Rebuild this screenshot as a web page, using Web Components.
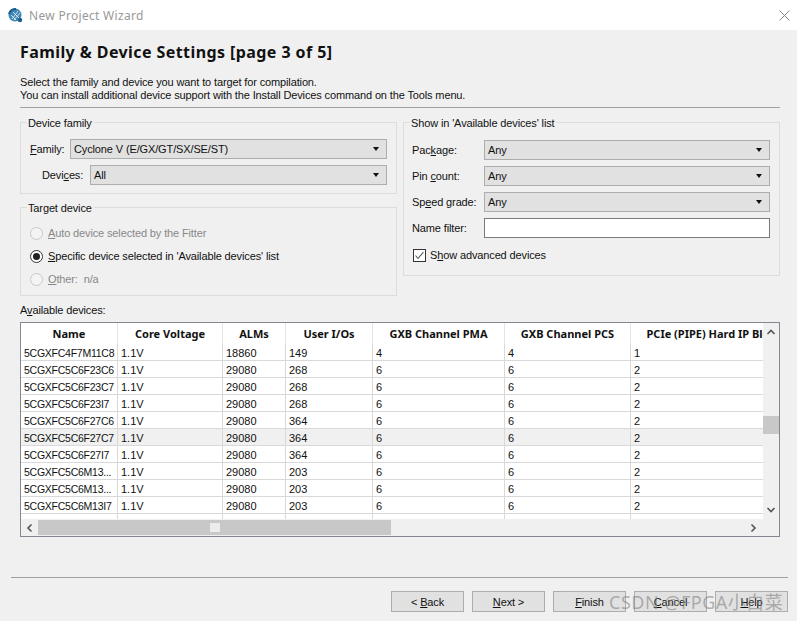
<!DOCTYPE html>
<html>
<head>
<meta charset="utf-8">
<style>
html, body { margin: 0; height: 621px; overflow: hidden; background: #f0f0f0; }
body { font: 11px "Liberation Sans", "Noto Sans CJK SC", sans-serif; color: #111; }
</style>
</head>
<body>
<wizard-window></wizard-window>
<script>
var uiFont = `"Liberation Sans", "Noto Sans CJK SC", sans-serif`;

// label text with one underlined mnemonic letter, "F_amily" style
function mnemonic(text) {
  return text.replace(/_(.)/, "<u>$1</u>");
}

class WizTitlebar extends HTMLElement {
  constructor() {
    super();
    this.attachShadow({ mode: "open" });
    this.shadowRoot.innerHTML = `
    <style>
    :host { display: flex; align-items: center; height: 30px; background: #fff; padding-left: 8px; box-sizing: border-box; letter-spacing: 0; }
    svg.logo { width: 15px; height: 15px; margin-right: 6px; }
    span { flex: 1; font: 12px "Noto Sans", sans-serif; color: #999; letter-spacing: .3px; }
    svg.close { width: 11px; height: 11px; margin-right: 7px; }
    </style>
    <svg class="logo" viewBox="0 0 15 15">
      <circle cx="7" cy="7" r="6.5" fill="#3f86b5"/>
      <path d="M1 6A7 7 0 0 1 8 1" stroke="#1d5f8c" stroke-width="2" fill="none"/>
      <path d="M4 11L10 3M6 12L12 5M5 4L11 10M3 7L8 12" stroke="#d8e8f2" stroke-width=".9" fill="none"/>
      <circle cx="12" cy="12" r="2.2" fill="#1d5f8c"/>
    </svg>
    <span><slot></slot></span>
    <svg class="close" viewBox="0 0 11 11"><path d="M.5 .5L10.5 10.5M10.5 .5L.5 10.5" stroke="#888" stroke-width="1" fill="none"/></svg>
    `;
  }
}

class WizCombo extends HTMLElement {
  constructor() {
    super();
    this.attachShadow({ mode: "open" });
    this.shadowRoot.innerHTML = `
    <style>
    :host { display: flex; align-items: center; height: 20px; box-sizing: border-box; background: #e1e1e1; border: 1px solid #adadad; padding: 0 7px 0 3px; }
    span { flex: 1; white-space: nowrap; }
    i { width: 0; height: 0; border: 3.5px solid transparent; border-top: 4px solid #111; border-bottom: 0; }
    </style>
    <span><slot></slot></span><i></i>
    `;
  }
}

class WizField extends HTMLElement {
  constructor() {
    super();
    this.attachShadow({ mode: "open" });
    this.shadowRoot.innerHTML = `
    <style>
    :host { display: flex; align-items: center; height: 20px; }
    label { flex: none; white-space: nowrap; box-sizing: border-box; padding-left: var(--label-pad, 0); width: var(--label-w, 72px); }
    .box { flex: 1; display: block; min-width: 0; }
    </style>
    <label></label><div class="box"><slot></slot></div>
    `;
  }
  connectedCallback() {
    this.shadowRoot.querySelector("label").innerHTML = mnemonic(this.getAttribute("label") || "");
  }
}

class WizGroup extends HTMLElement {
  constructor() {
    super();
    this.attachShadow({ mode: "open" });
    this.shadowRoot.innerHTML = `
    <style>
    :host { display: block; position: relative; box-sizing: border-box; border: 1px solid #dcdcdc; }
    .legend { position: absolute; top: -7px; left: 6px; background: #f0f0f0; padding: 0 2px 0 1px; line-height: 15px; }
    </style>
    <div class="legend"></div><slot></slot>
    `;
  }
  connectedCallback() {
    this.shadowRoot.querySelector(".legend").textContent = this.getAttribute("legend");
  }
}

class WizRadio extends HTMLElement {
  constructor() {
    super();
    this.attachShadow({ mode: "open" });
    this.shadowRoot.innerHTML = `
    <style>
    :host { display: flex; align-items: center; height: 23px; }
    .dot { flex: none; box-sizing: border-box; width: 13px; height: 13px; border-radius: 50%; border: 1px solid #333; background: #fff; margin-right: 5px; display: flex; align-items: center; justify-content: center; }
    .dot b { width: 7px; height: 7px; border-radius: 50%; background: #222; display: none; }
    .txt { white-space: pre; position: relative; top: -1px; }
    :host([checked]) .dot b { display: block; }
    :host([disabled]) { color: #888; }
    :host([disabled]) .dot { border-color: #c8c8c8; background: #f4f4f4; }
    </style>
    <span class="dot"><b></b></span><span class="txt"></span>
    `;
  }
  connectedCallback() {
    this.shadowRoot.querySelector(".txt").innerHTML = mnemonic(this.getAttribute("label"));
  }
}

class WizCheck extends HTMLElement {
  constructor() {
    super();
    this.attachShadow({ mode: "open" });
    this.shadowRoot.innerHTML = `
    <style>
    :host { display: flex; align-items: center; height: 16px; }
    svg { width: 13px; height: 13px; margin-right: 4px; flex: none; }
    </style>
    <svg viewBox="0 0 13 13"><rect x=".5" y=".5" width="12" height="12" fill="#fff" stroke="#333"/><path d="M2.5 6.5L5 9.5L10.5 3" fill="none" stroke="#555" stroke-width="1.1"/></svg>
    <span class="txt"></span>
    `;
  }
  connectedCallback() {
    this.shadowRoot.querySelector(".txt").innerHTML = mnemonic(this.getAttribute("label"));
  }
}

var columns = [
  ["Name", 97], ["Core Voltage", 105], ["ALMs", 63], ["User I/Os", 87],
  ["GXB Channel PMA", 132], ["GXB Channel PCS", 126], ["PCIe (PIPE) Hard IP Blocks", 173]
];
var rows = [
  ["5CGXFC4F7M11C8", "18860", "149", "4", "4", "1"],
  ["5CGXFC5C6F23C6", "29080", "268", "6", "6", "2"],
  ["5CGXFC5C6F23C7", "29080", "268", "6", "6", "2"],
  ["5CGXFC5C6F23I7", "29080", "268", "6", "6", "2"],
  ["5CGXFC5C6F27C6", "29080", "364", "6", "6", "2"],
  ["5CGXFC5C6F27C7", "29080", "364", "6", "6", "2"],
  ["5CGXFC5C6F27I7", "29080", "364", "6", "6", "2"],
  ["5CGXFC5C6M13...", "29080", "203", "6", "6", "2"],
  ["5CGXFC5C6M13...", "29080", "203", "6", "6", "2"],
  ["5CGXFC5C6M13I7", "29080", "203", "6", "6", "2"],
  ["", "", "", "", "", ""]
];

class DeviceTable extends HTMLElement {
  constructor() {
    super();
    this.attachShadow({ mode: "open" });
    var tpl = columns.map(c => c[1] + "px").join(" ");
    var head = columns.map(c => `<div class="th">${c[0]}</div>`).join("");
    var body = rows.map((r, i) => {
      var cells = [r[0], r[0] ? "1.1V" : ""].concat(r.slice(1));
      return `<div class="row${i == 5 ? " sel" : ""}">` + cells.map(v => `<div class="td">${v}</div>`).join("") + `</div>`;
    }).join("");
    this.shadowRoot.innerHTML = `
    <style>
    :host { display: grid; grid-template-columns: 1fr 16px; grid-template-rows: 1fr 17px; height: 215px; box-sizing: border-box; border: 1px solid #828790; background: #fff; overflow: hidden; letter-spacing: 0; }
    .view { overflow: hidden; min-width: 0; min-height: 0; }
    .head, .row { display: grid; grid-template-columns: ${tpl}; width: max-content; }
    .head { height: 21px; }
    .th { font: 700 11px/21px "Noto Sans", sans-serif; text-align: center; border-right: 1px solid #e4e4e4; white-space: nowrap; overflow: hidden; box-sizing: border-box; }
    .row { height: 17px; }
    .row.sel { background: #f0f0f0; }
    .td { box-sizing: border-box; padding: 1px 0 0 3px; line-height: 16px; border-right: 1px solid #d9d9d9; border-bottom: 1px solid #d9d9d9; white-space: nowrap; overflow: hidden; }
    .td:first-child { font-size: 10.5px; letter-spacing: -.25px; }
    .vbar { background: #f0f0f0; display: flex; flex-direction: column; align-items: center; }
    .vbar svg, .hbar svg { flex: none; }
    .vtrack { flex: 1; width: 100%; padding-top: 75px; box-sizing: border-box; }
    .vtrack b { display: block; height: 18px; background: #c8c8c8; }
    .hbar { background: #f0f0f0; display: flex; align-items: center; }
    .htrack { width: 353px; height: 15px; background: #c8c8c8; display: flex; align-items: center; justify-content: center; }
    .htrack b { width: 10px; height: 9px; background: #ececec; }
    .corner { background: #f0f0f0; }
    </style>
    <div class="view"><div class="head">${head}</div>${body}</div>
    <div class="vbar">
      <svg width="16" height="18" viewBox="0 0 16 18"><path d="M4.5 11L8 7.5L11.5 11" fill="none" stroke="#555" stroke-width="1.6"/></svg>
      <div class="vtrack"><b></b></div>
      <svg width="16" height="18" viewBox="0 0 16 18"><path d="M4.5 7L8 10.5L11.5 7" fill="none" stroke="#555" stroke-width="1.6"/></svg>
    </div>
    <div class="hbar">
      <svg width="17" height="16" viewBox="0 0 17 16"><path d="M10.5 4.5L7 8L10.5 11.5" fill="none" stroke="#555" stroke-width="1.6"/></svg>
      <div class="htrack"><b></b></div>
      <span style="flex:1"></span>
      <svg width="17" height="16" viewBox="0 0 17 16"><path d="M5.5 4.5L9 8L5.5 11.5" fill="none" stroke="#555" stroke-width="1.6"/></svg>
    </div>
    <div class="corner"></div>
    `;
  }
}

class WizButton extends HTMLElement {
  constructor() {
    super();
    this.attachShadow({ mode: "open" });
    this.shadowRoot.innerHTML = `
    <style>
    :host { display: flex; align-items: center; justify-content: center; width: 73px; height: 21px; box-sizing: border-box; background: #e1e1e1; border: 1px solid #adadad; }
    </style>
    <span class="txt"></span>
    `;
  }
  connectedCallback() {
    this.shadowRoot.querySelector(".txt").innerHTML = mnemonic(this.getAttribute("label"));
  }
}

class WizardWindow extends HTMLElement {
  constructor() {
    super();
    this.attachShadow({ mode: "open" });
    this.shadowRoot.innerHTML = `
    <style>
    :host { display: block; position: relative; width: 797px; height: 621px; overflow: hidden; background: #f0f0f0; font: 11px ${uiFont}; letter-spacing: -.13px; color: #111; }
    .main { padding: 0 17px 0 20px; }
    h1 { margin: 0; padding-top: 13px; height: 26px; font: 700 16px/19px "Noto Sans", sans-serif; letter-spacing: .42px; color: #111; white-space: nowrap; }
    p { margin: 0; padding-top: 7px; line-height: 13px; white-space: nowrap; height: 26px; }
    hr { border: 0; border-top: 1px solid #a0a0a0; margin: 5px 0 14px; height: 0; }
    .cols { display: grid; grid-template-columns: 377px 377px; column-gap: 6px; align-items: start; }
    .left { display: flex; flex-direction: column; gap: 13px; }
    .family { height: 72px; padding: 16px 9px 0 8px; box-sizing: border-box; display: flex; flex-direction: column; gap: 6px; }
    .target { height: 89px; padding: 14px 0 0 9px; box-sizing: border-box; }
    .show { height: 154px; padding: 17px 9px 0 8px; box-sizing: border-box; display: flex; flex-direction: column; gap: 6px; }
    .show wiz-check { margin-top: 3px; margin-left: 1px; }
    .avail { margin: 7px 0 0; padding-top: 0; height: 19px; line-height: 15px; }
    .foot { position: absolute; left: 11px; right: 9px; top: 577px; border-top: 1px solid #a0a0a0; }
    .btns { position: absolute; right: 9px; top: 591px; display: flex; gap: 8px; }
    .wm { position: absolute; left: 609px; top: 590px; font: 18px/24px "Noto Sans", "Noto Sans CJK SC", sans-serif; color: rgba(130,130,130,.6); white-space: nowrap; pointer-events: none; letter-spacing: .5px; }
    </style>
    <wiz-titlebar>New Project Wizard</wiz-titlebar>
    <div class="main">
      <h1>Family &amp; Device Settings [page 3 of 5]</h1>
      <p>Select the family and device you want to target for compilation.<br>You can install additional device support with the Install Devices command on the Tools menu.</p>
      <hr>
      <div class="cols">
        <div class="left">
          <wiz-group class="family" legend="Device family">
            <wiz-field label="_Family:" style="--label-w:41px;--label-pad:1px"><wiz-combo>Cyclone V (E/GX/GT/SX/SE/ST)</wiz-combo></wiz-field>
            <wiz-field label="Devi_ces:" style="--label-w:61px;--label-pad:13px"><wiz-combo>All</wiz-combo></wiz-field>
          </wiz-group>
          <wiz-group class="target" legend="Target device">
            <wiz-radio disabled label="_Auto device selected by the Fitter"></wiz-radio>
            <wiz-radio checked label="_Specific device selected in 'Available devices' list"></wiz-radio>
            <wiz-radio disabled label="_Other:  n/a"></wiz-radio>
          </wiz-group>
        </div>
        <wiz-group class="show" legend="Show in 'Available devices' list">
          <wiz-field label="Pac_kage:"><wiz-combo>Any</wiz-combo></wiz-field>
          <wiz-field label="Pin _count:"><wiz-combo>Any</wiz-combo></wiz-field>
          <wiz-field label="Sp_eed grade:"><wiz-combo>Any</wiz-combo></wiz-field>
          <wiz-field label="Name filter:"><div style="height:20px;box-sizing:border-box;background:#fff;border:1px solid #7a7a7a"></div></wiz-field>
          <wiz-check label="S_how advanced devices"></wiz-check>
        </wiz-group>
      </div>
      <p class="avail">A<u>v</u>ailable devices:</p>
      <device-table></device-table>
    </div>
    <div class="foot"></div>
    <div class="btns">
      <wiz-button label="&lt; _Back"></wiz-button>
      <wiz-button label="_Next &gt;"></wiz-button>
      <wiz-button label="_Finish"></wiz-button>
      <wiz-button label="_Cancel"></wiz-button>
      <wiz-button label="_Help"></wiz-button>
    </div>
    <div class="wm">CSDN @FPGA小白菜</div>
    `;
  }
}

customElements.define("wiz-titlebar", WizTitlebar);
customElements.define("wiz-combo", WizCombo);
customElements.define("wiz-field", WizField);
customElements.define("wiz-group", WizGroup);
customElements.define("wiz-radio", WizRadio);
customElements.define("wiz-check", WizCheck);
customElements.define("device-table", DeviceTable);
customElements.define("wiz-button", WizButton);
customElements.define("wizard-window", WizardWindow);
</script>
</body>
</html>
